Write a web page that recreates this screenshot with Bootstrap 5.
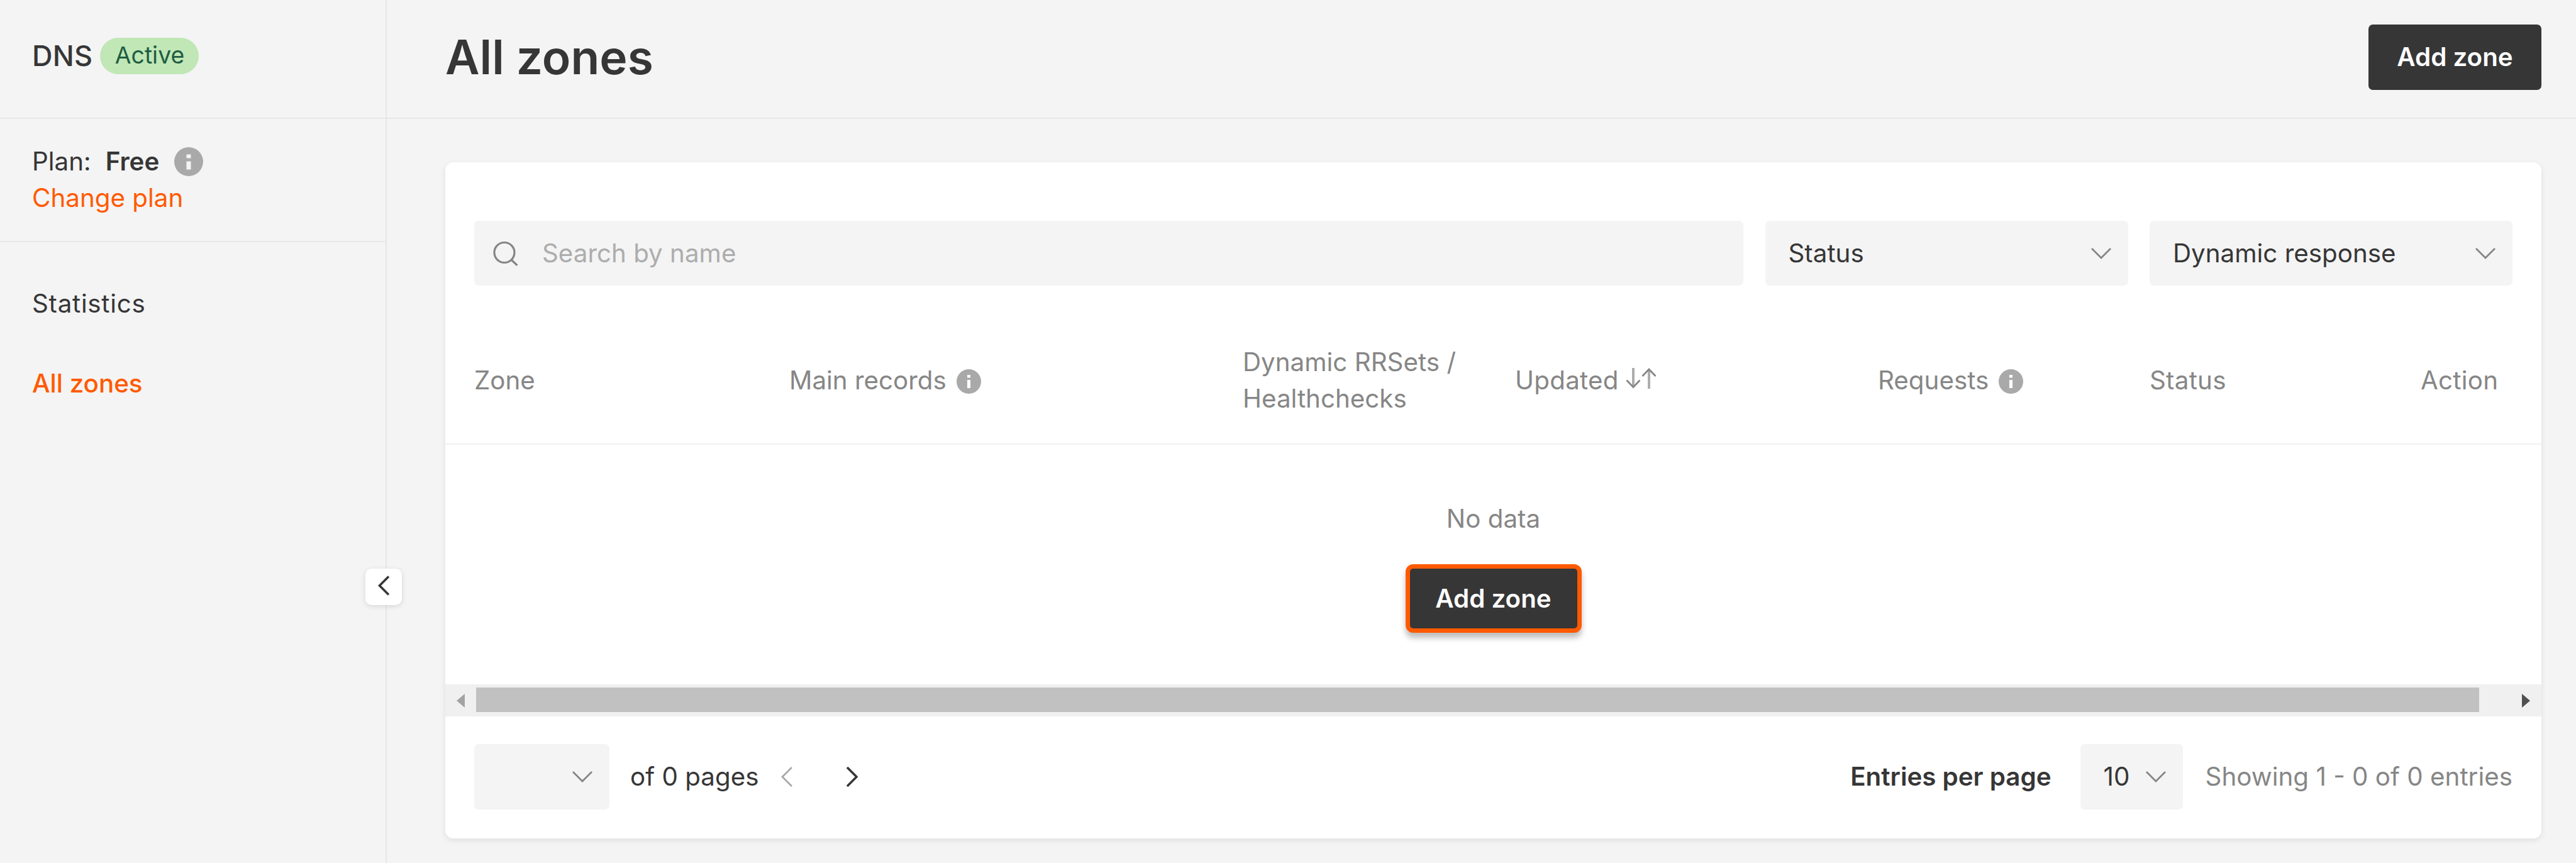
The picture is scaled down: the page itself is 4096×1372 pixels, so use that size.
<!DOCTYPE html>
<html lang="en">
<head>
<meta charset="utf-8">
<title>All zones</title>
<link href="https://cdn.jsdelivr.net/npm/bootstrap@5.3.0/dist/css/bootstrap.min.css" rel="stylesheet">
<style>
  :root { --ink: #363636; --muted: #868686; --accent: #ff5a00; --surface: #f4f4f4; --line: #e7e7e7; }
  body { font-family: Inter, "Liberation Sans", sans-serif; font-size: 40.35px; line-height: 58px; color: var(--ink); background: var(--surface); width: 4096px; height: 1372px; overflow: hidden; }
  svg { display: block; flex: none; fill: none; stroke: currentColor; stroke-width: 2.8; }

  /* Sidebar */
  .sidebar { width: 615px; border-right: 2px solid var(--line); }
  .side-head { height: 189px; border-bottom: 2px solid var(--line); padding: 0 51px 9px 51px; }
  .brand { font-size: 45px; font-weight: 500; letter-spacing: .3px; }
  .status-pill { margin-left: 12px; width: 157px; height: 58px; line-height: 56px; font-size: 37.4px; text-align: center; background: #c0e7b5; color: #205c43; }
  .side-plan { height: 196px; border-bottom: 2px solid var(--line); padding: 39px 51px 0; }
  .plan-name { font-weight: 600; margin-left: 23px; }
  .plan-hint { margin-left: 24px; }
  .side-nav { padding: 69px 51px 0; gap: 69px; }
  .accent { color: var(--accent); text-decoration: none; }
  .side-nav a { color: var(--ink); text-decoration: none; letter-spacing: .7px; }
  .side-nav a.active { color: var(--accent); font-weight: 500; letter-spacing: 0; }
  .hint { color: #a9a9a9; stroke: none; fill: currentColor; }
  .collapse-btn { left: 581px; top: 904px; width: 58px; height: 58px; border: 0; border-radius: 10px; background: #fff; color: var(--ink); box-shadow: 0 2px 8px rgba(0,0,0,.12); padding: 0 0 4px; }
  .collapse-btn svg { stroke-width: 3.6; }

  /* Page header */
  .page-head { height: 189px; border-bottom: 2px solid var(--line); padding: 0 55px 5px 93px; }
  .page-title { font-size: 75px; line-height: 90px; font-weight: 600; }
  .dark-btn { background: #363636; color: #fff; font-size: 40.35px; font-weight: 600; line-height: 58px; border: 0; border-radius: 7px; height: 104px; width: 275px; padding: 0; }
  .dark-btn.marked { width: 280px; height: 109px; border: 7px solid var(--accent); border-radius: 12px; box-shadow: 0 8px 10px rgba(0,0,0,.26); }

  /* Zones panel */
  .panel { margin: 69px 55px 0 93px; height: 1075px; border-radius: 13px; background: #fff; box-shadow: 0 3px 10px rgba(0,0,0,.09); }
  .filters { padding: 93px 46px 0; gap: 34.5px; }
  .field { height: 103px; border-radius: 7px; background: var(--surface); }
  .field svg { color: #858585; }
  .search-field { padding-left: 30px; }
  .search-field .lens { stroke-width: 3.2; }
  .search-field input { border: 0; background: transparent; font-size: 40.35px; padding: 0 0 0 38px; color: var(--ink); line-height: 58px; box-shadow: none; }
  .search-field input::placeholder { color: #adadad; opacity: 1; }
  .select-lg { width: 577px; padding: 0 27px 0 37px; }
  .grid-head { height: 253px; border-bottom: 2px solid #f1f1f1; padding: 0 46px; color: var(--muted); }
  .grid-head table { table-layout: fixed; width: 3240px; height: 100%; }
  .grid-head th { font-weight: 400; padding: 92px 0 42px; vertical-align: middle; }
  .grid-head .hint { margin-top: 4px; }
  .grid-head .spread { letter-spacing: .25px; }
  .sort { margin-left: 11px; margin-top: -7px; }
  .sort .shaft { stroke: #adadad; stroke-width: 4; }
  .empty { height: 381px; padding-top: 89px; color: var(--muted); }
  .empty .dark-btn { margin-top: 43px; }
  .scroll-track { height: 51px; background: #f0f0f0; padding: 0 18px; }
  .scroll-thumb { height: 39px; width: 3185px; margin: -2px 0 0 17.5px; background: #c1c1c1; }
  .scroll-track svg { stroke: none; fill: currentColor; }

  /* Pager */
  .pager { padding: 44px 46px 0; }
  .pager .field { height: 104px; }
  .page-select { width: 215px; padding-right: 27px; }
  .page-count { margin-left: 33px; }
  .prev { margin-left: 35px; color: #a8a8a8; }
  .next { margin-left: 86px; stroke-width: 3.6; }
  .per-page { font-weight: 600; }
  .size-select { width: 163px; margin-left: 46px; padding: 0 27px 0 37px; }
  .range-note { margin-left: 36px; color: var(--muted); }
</style>
</head>
<body>
<div class="d-flex h-100 position-relative">
  <aside class="sidebar flex-shrink-0">
    <div class="side-head d-flex align-items-center">
      <span class="brand">DNS</span><span class="status-pill rounded-pill">Active</span>
    </div>
    <div class="side-plan">
      <div class="d-flex align-items-center">
        <span>Plan:</span><span class="plan-name">Free</span>
        <svg class="hint plan-hint" width="46" height="46" viewBox="0 0 46 46"><path fill-rule="evenodd" d="M23 0a23 23 0 1 0 0 46a23 23 0 1 0 0-46zM19.500 11.500h7v6h-7zM19.500 22.500h7v13h-7z"/></svg>
      </div>
      <a class="accent d-block" href="#">Change plan</a>
    </div>
    <nav class="side-nav nav flex-column">
      <a href="#">Statistics</a>
      <a class="active" href="#">All zones</a>
    </nav>
  </aside>
  <button class="collapse-btn position-absolute d-flex align-items-center justify-content-center" aria-label="Collapse">
    <svg width="18" height="32" viewBox="0 0 18 32"><path d="M17 1.500L2.500 16L17 30.500"/></svg>
  </button>
  <main class="flex-grow-1">
    <header class="page-head d-flex align-items-center justify-content-between">
      <h1 class="page-title mb-0">All zones</h1>
      <button class="btn dark-btn">Add zone</button>
    </header>
    <section class="panel">
      <div class="filters d-flex">
        <div class="field search-field d-flex align-items-center flex-grow-1">
          <svg class="lens" width="40" height="40" viewBox="0 0 40 40"><circle cx="18" cy="18.500" r="16"/><path d="M29 30L38.500 39"/></svg>
          <input class="form-control" type="text" placeholder="Search by name">
        </div>
        <div class="field select-lg d-flex align-items-center justify-content-between flex-shrink-0">Status
          <svg width="32" height="18" viewBox="0 0 32 18"><path d="M1 1L16 16L31 1"/></svg></div>
        <div class="field select-lg d-flex align-items-center justify-content-between flex-shrink-0">Dynamic response
          <svg width="32" height="18" viewBox="0 0 32 18"><path d="M1 1L16 16L31 1"/></svg></div>
      </div>
      <div class="grid-head">
        <table>
          <colgroup><col width="501"><col width="721"><col width="433"><col width="577"><col width="432"><col width="431"><col width="145"></colgroup>
          <tr>
            <th>Zone</th>
            <th><span class="d-flex align-items-center">Main records<svg class="hint ms-3" width="39" height="39" viewBox="0 0 46 46"><path fill-rule="evenodd" d="M23 0a23 23 0 1 0 0 46a23 23 0 1 0 0-46zM20 10.500h6v5.500h-6zM20 20h6v15.500h-6z"/></svg></span></th>
            <th>Dynamic RRSets /<br>Healthchecks</th>
            <th><span class="spread d-flex align-items-center">Updated<svg class="sort" width="50" height="33" viewBox="0 0 50 33"><path class="shaft" d="M12 0V31M37 33V2"/><path d="M1.500 19.500L12 30.500L22.500 19.500M26.500 13L37 2L47.500 13"/></svg></span></th>
            <th><span class="d-flex align-items-center">Requests<svg class="hint ms-3" width="39" height="39" viewBox="0 0 46 46"><path fill-rule="evenodd" d="M23 0a23 23 0 1 0 0 46a23 23 0 1 0 0-46zM20 10.500h6v5.500h-6zM20 20h6v15.500h-6z"/></svg></span></th>
            <th class="spread">Status</th>
            <th class="spread">Action</th>
          </tr>
        </table>
      </div>
      <div class="empty d-flex flex-column align-items-center">
        <span>No data</span>
        <button class="btn dark-btn marked">Add zone</button>
      </div>
      <div class="scroll-track d-flex align-items-center">
        <svg width="13" height="22" viewBox="0 0 13 22" color="#a3a3a3"><path d="M13 0V22L0 11z"/></svg>
        <div class="scroll-thumb"></div>
        <svg class="ms-auto" width="13" height="22" viewBox="0 0 13 22" color="#505050"><path d="M0 0V22L13 11z"/></svg>
      </div>
      <div class="pager d-flex align-items-center">
        <div class="field page-select d-flex align-items-center justify-content-end"><svg width="32" height="18" viewBox="0 0 32 18"><path d="M1 1L16 16L31 1"/></svg></div>
        <span class="page-count">of 0 pages</span>
        <svg class="prev" width="18" height="32" viewBox="0 0 18 32"><path d="M17 1L2 16L17 31"/></svg>
        <svg class="next" width="18" height="32" viewBox="0 0 18 32"><path d="M1 1L16 16L1 31"/></svg>
        <span class="per-page ms-auto">Entries per page</span>
        <div class="field size-select d-flex align-items-center justify-content-between">10<svg width="32" height="18" viewBox="0 0 32 18"><path d="M1 1L16 16L31 1"/></svg></div>
        <span class="range-note">Showing 1 - 0 of 0 entries</span>
      </div>
    </section>
  </main>
</div>
<script src="https://cdn.jsdelivr.net/npm/bootstrap@5.3.0/dist/js/bootstrap.bundle.min.js"></script>
</body>
</html>
